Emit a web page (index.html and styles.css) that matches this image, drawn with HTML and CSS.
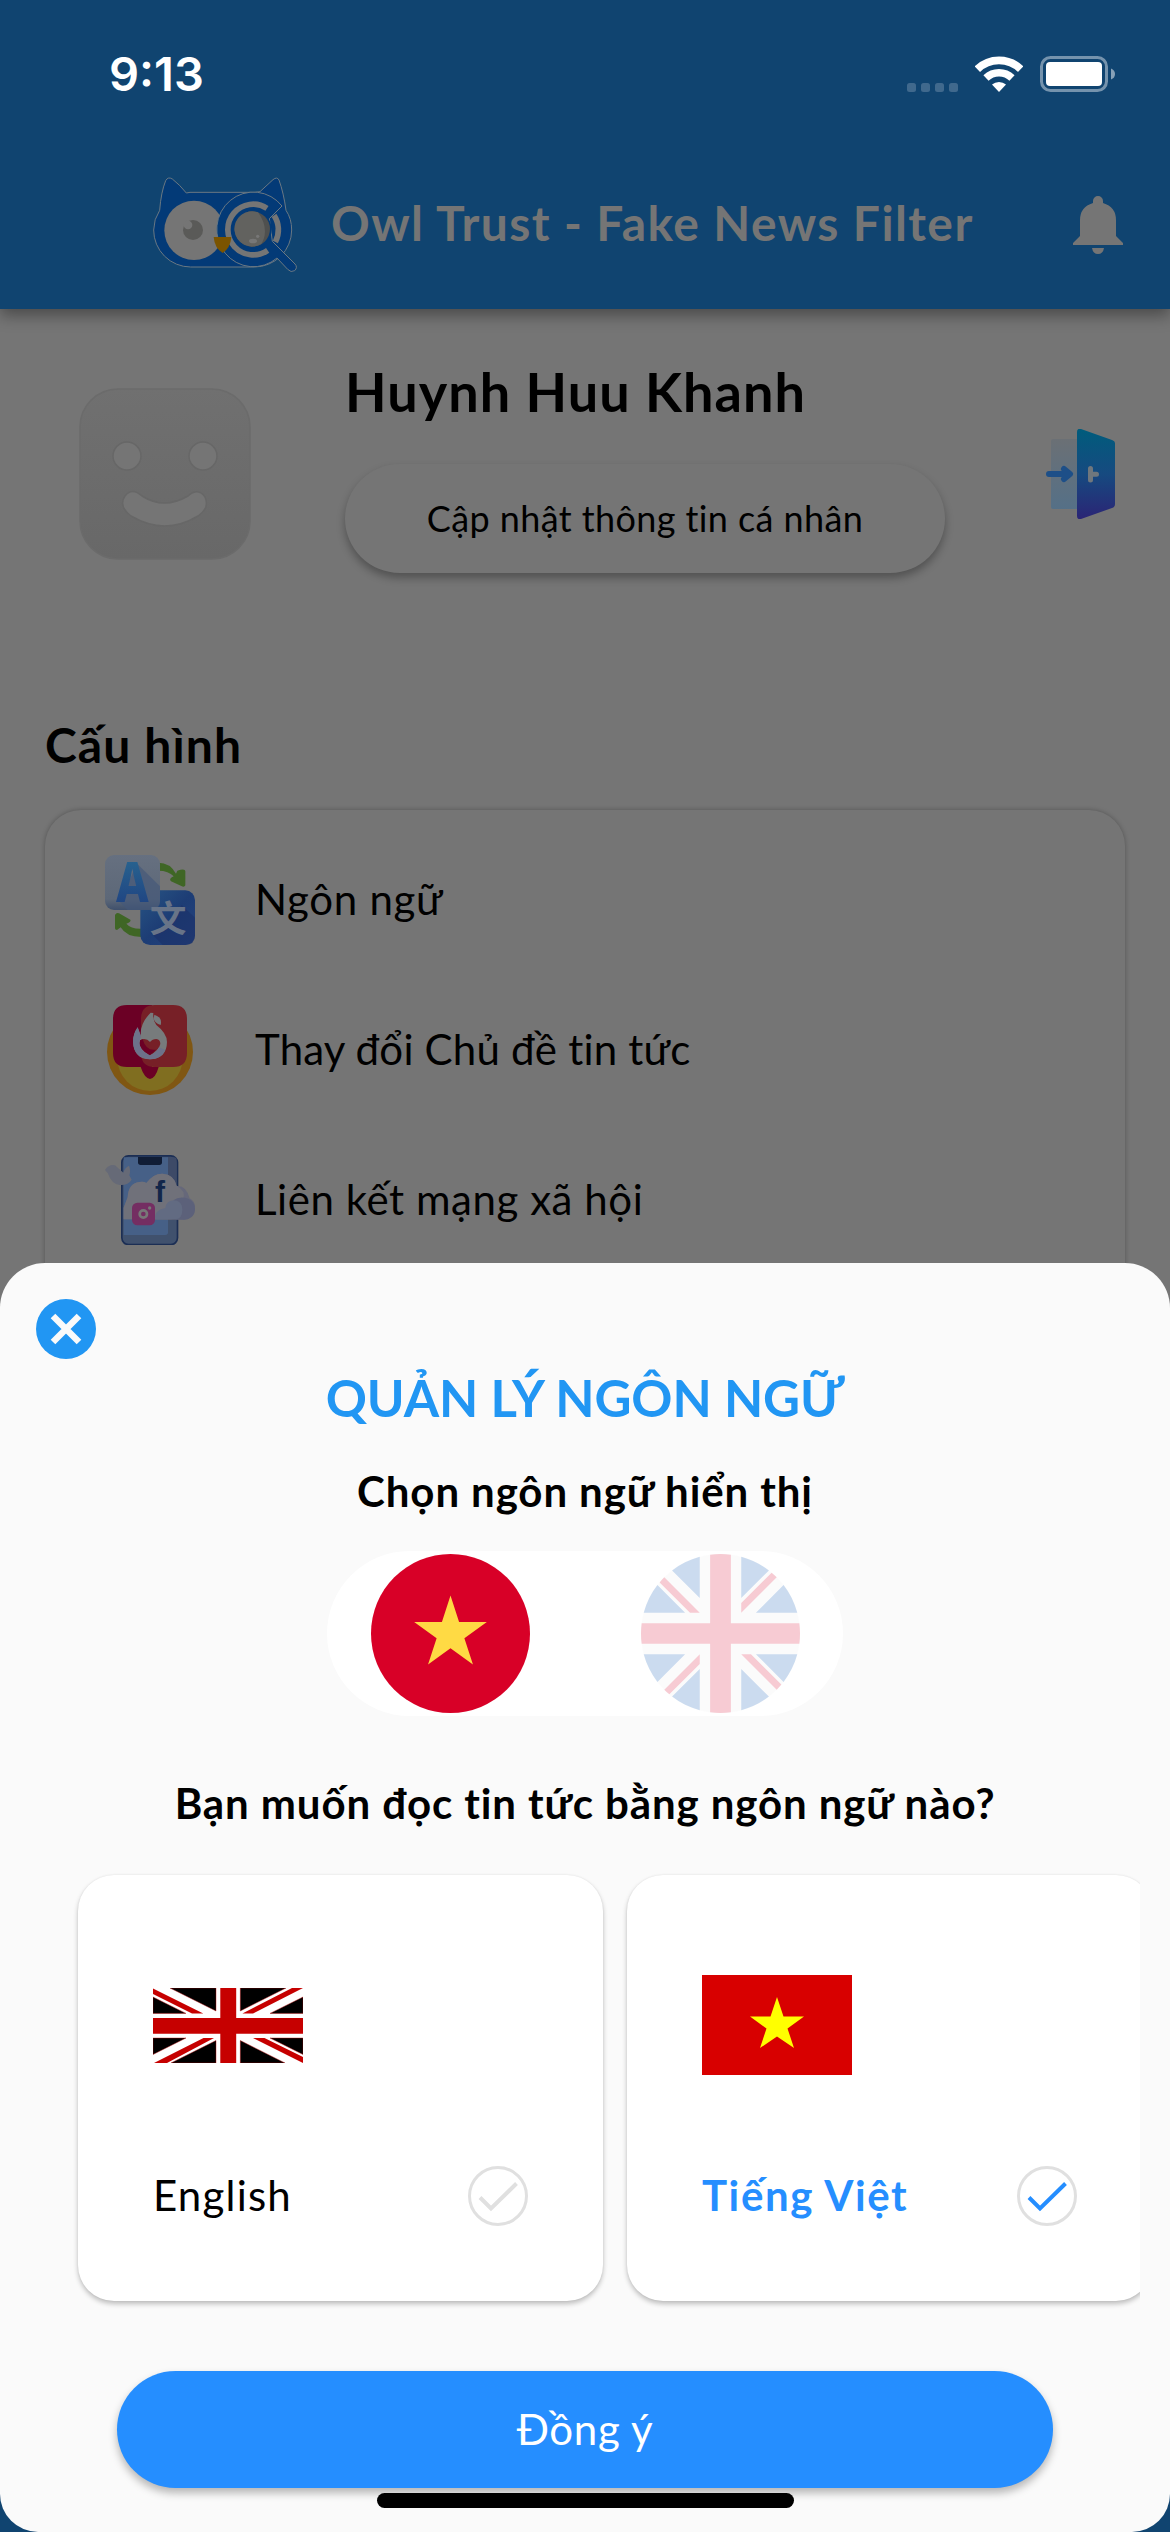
FILE: index.html
```
<!DOCTYPE html>
<html lang="vi">
<head>
<meta charset="utf-8">
<title>Owl Trust - Fake News Filter</title>
<link rel="stylesheet" href="styles.css">
</head>
<body>
<div class="screen">
  <header class="header">
    <div class="status">
      <span class="clock">9:13</span>
      <div class="status-icons">
        <svg class="dots" viewBox="0 0 51 9"><g fill="#40698d"><rect width="9" height="9" rx="2.5"/><rect x="14" width="9" height="9" rx="2.5"/><rect x="28" width="9" height="9" rx="2.5"/><rect x="42" width="9" height="9" rx="2.5"/></g></svg>
        <svg class="wifi" viewBox="0 0 48 36" fill="none" stroke="#fff"><path d="M2.300 13.200a31 31 0 0 1 43.400 0" stroke-width="7.800"/><path d="M11 22a18.600 18.600 0 0 1 26 0" stroke-width="7.400"/><path d="M24 36l-7-7.400a10.400 10.400 0 0 1 14 0z" fill="#fff" stroke="none"/></svg>
        <svg class="battery" viewBox="0 0 75 36"><rect x="1.5" y="1.5" width="65" height="33" rx="9" fill="none" stroke="#7593ad" stroke-width="3"/><rect x="6" y="6" width="56" height="24" rx="4" fill="#fff"/><path d="M71 12.500q4 1.500 4 5.500t-4 5.500z" fill="#87a1b7"/></svg>
      </div>
    </div>
    <div class="titlebar">
      <svg class="owl" viewBox="39 51 432 285">
        <g fill="#033a77" stroke="#6a7883" stroke-width="3" stroke-linejoin="round">
          <path d="M150 97 H345 L360 95 L399 59 Q411 49 417 60 Q431 99 438 151 Q455 176 455 210 A112 111 0 0 1 343 321 H152 A111 111 0 0 1 41 210 Q41 178 59 151 Q63 97 77 62 Q84 49 97 57 Q119 74 139 99z"/>
          <circle cx="162" cy="211" r="89" fill="#757575" stroke="none"/>
          <path d="M426 138 A110 112 0 1 0 411 294 L443 328 Q453 339 464 332 Q474 322 465 312 L397 244 L388 176z"/>
        </g>
        <circle cx="159" cy="210" r="30" fill="#5a5a58"/><circle cx="144" cy="195" r="13" fill="#757575"/>
        <path d="M381 145 A76 76 0 1 0 383 271" fill="none" stroke="#757575" stroke-width="17"/>
        <path d="M402 166 A78 78 0 0 1 406 246" fill="none" stroke="#757575" stroke-width="17"/>
        <circle cx="336" cy="208" r="59" fill="#033a77"/>
        <circle cx="337" cy="207" r="53" fill="#4f504f"/><path d="M354 157A53 53 0 1 0 364 252Q390 207 354 157z" fill="#62625f"/>
        <ellipse cx="339" cy="243" rx="12" ry="7" fill="#777"/><circle cx="353" cy="229" r="5" fill="#777"/>
        <path d="M221 231h53q-3 34-26 48-24-14-27-48z" fill="#7b5400"/>
      </svg>
      <h1 class="app-name">Owl Trust - Fake News Filter</h1>
      <svg class="bell" viewBox="0 0 50 59" fill="#757575"><path d="M20 6a5 5 0 0 1 10 0v2Q43 12 43 25V41l7 7v2H0v-2l7-7V25Q7 12 20 8zM19 53h12q-1 6-6 6t-6-6z"/></svg>
    </div>
  </header>

  <section class="profile">
    <svg class="avatar" viewBox="0 0 172 172">
      <defs><linearGradient id="face" x2="0" y2="1"><stop stop-color="#707070"/><stop offset="1" stop-color="#686868"/></linearGradient></defs>
      <rect x="1" y="1" width="170" height="170" rx="38" fill="url(#face)" stroke="#6b6b6b" stroke-width="1.500"/>
      <g fill="#757575" stroke="#676767" stroke-width="1.500"><circle cx="48" cy="68" r="14"/><circle cx="124" cy="68" r="14"/>
      <path d="M63 108Q85 122 109 108Q119 99 126 109Q131 120 119 128Q86 148 52 128Q39 118 46 108Q53 99 63 108z"/></g>
    </svg>
    <div class="profile-main">
      <h2 class="name">Huynh Huu Khanh</h2>
      <button class="update">Cập nhật thông tin cá nhân</button>
    </div>
    <svg class="door" viewBox="0 0 69 90">
      <defs>
        <linearGradient id="door" x2="0" y2="1"><stop stop-color="#005c7c"/><stop offset=".5" stop-color="#164a80"/><stop offset="1" stop-color="#2b2475"/></linearGradient>
        <linearGradient id="room" x2="0" y2="1"><stop stop-color="#6b7075"/><stop offset="1" stop-color="#557087"/></linearGradient>
      </defs>
      <rect x="5" y="10" width="30" height="70" rx="2" fill="url(#room)"/>
      <path d="M31 3q0-4 4-3l31 11q3 1 3 3v61q0 3-3 4L35 90q-4 1-4-3z" fill="url(#door)"/>
      <path d="M3 45H22M18 40l6 5-6 5" fill="none" stroke="#1d4f88" stroke-width="6" stroke-linecap="round" stroke-linejoin="round"/>
      <path d="M44.500 39.500V51M45 45.200h5.500" fill="none" stroke="#70777d" stroke-width="5" stroke-linecap="round"/>
    </svg>
  </section>

  <h3 class="section-title">Cấu hình</h3>
  <ul class="settings">
    <li class="setting">
      <svg class="setting-icon" viewBox="45 45 270 270">
        <defs>
          <linearGradient id="paper" x2="0" y2="1"><stop stop-color="#667080"/><stop offset=".8" stop-color="#5d6878"/><stop offset="1" stop-color="#3f506c"/></linearGradient>
          <linearGradient id="letter" x2="0" y2="1"><stop stop-color="#2b6e94"/><stop offset="1" stop-color="#1d3b7e"/></linearGradient>
          <linearGradient id="tile" x2="1" y2="1"><stop stop-color="#285584"/><stop offset=".5" stop-color="#1d3d75"/><stop offset="1" stop-color="#25427f"/></linearGradient>
        </defs>
        <path d="M205 68q35 0 53 33l4-9q24-8 24 2v42q-3 7-12 2l-31-14q-8-8 8-15-15-17-46-17zM154 291q-45 0-62-29l-11 8q-6 0-6-5v-40q4-8 12-5l34 19q4 6-12 12 14 16 45 15z" fill="#3f6625"/>
        <rect x="151" y="151" width="164" height="164" rx="29" fill="url(#tile)"/>
        <path d="M275 195L315 233V286Q315 315 286 315H218L183 280L250 240z" fill="#1b3068" opacity=".6"/>
        <rect x="45" y="45" width="165" height="165" rx="27" fill="url(#paper)"/>
        <path d="M140 70L210 139V182Q210 210 183 210H113L91 188z" fill="#44587a" opacity=".65"/>
        <text x="78" y="187" textLength="98" lengthAdjust="spacingAndGlyphs" class="icon-a">A</text>
        <text x="234" y="276" class="icon-cjk">文</text>
      </svg>
      <span class="setting-label tight-a">Ngôn ngữ</span>
    </li>
    <li class="setting">
      <svg class="setting-icon" viewBox="45 495 270 270">
        <circle cx="180" cy="636" r="129" fill="#805713"/><circle cx="180" cy="655" r="98" fill="#806e20"/>
        <path d="M111 495h75v186h20q-9 33-26 36-17-3-28-36h-41q-42 0-42-42v-102q0-42 42-42z" fill="#6b0025"/>
        <path d="M195 495h54q42 0 42 42v102q0 42-42 42h-54q-42 0-42-42v-102q0-42 42-42z" fill="#772027"/>
        <path d="M182 518Q148 552 153 588L143 562Q129 582 129 606Q133 658 180 658Q230 656 231 606Q231 580 199 555Q188 541 190 519zM179 647Q148 628 148 610Q150 597 162 597Q173 597 180 606Q187 597 199 597Q211 599 211 612Q207 631 179 647z" fill="#777b7c" fill-rule="evenodd"/>
        <path d="M143 562L153 590 148 603Q146 629 180 646Q200 636 207 622L226 630Q214 658 180 658Q131 655 129 606Q129 582 143 562z" fill="#6d728a"/>
        <path d="M150 601Q146 629 179 645Q190 638 198 629Q168 634 158 598z" fill="#6b0025"/>
        <path d="M193 524Q218 532 212 555Q194 549 191 536z" fill="#767a7c"/>
      </svg>
      <span class="setting-label tight-b">Thay đổi Chủ đề tin tức</span>
    </li>
    <li class="setting">
      <svg class="setting-icon" viewBox="45 945 270 270">
        <rect x="95.500" y="947.500" width="167" height="266" rx="20" fill="#40516d" stroke="#1b2e54" stroke-width="5"/>
        <path d="M101 952h133v225q0 8-8 8H101z" fill="#466087"/><path d="M234 952h18q8 0 8 8v180h-26z" fill="#3d4a67"/>
        <path d="M144 951h72v16q0 8-8 8h-56q-8 0-8-8z" fill="#111d35"/>
        <path d="M101 1138V1103L113 1072Q115 1030 148 1026Q161 1023 169 1029Q191 1000 218 1001Q252 1003 260 1038Q288 1035 299 1075Q317 1084 315 1108Q312 1137 283 1139z" fill="#66687a"/>
        <path d="M101 1138V1103L113 1072Q115 1030 148 1026Q161 1023 169 1029Q191 1000 218 1001Q252 1003 260 1038Q288 1050 280 1080Q285 1139 240 1138z" fill="#70717a"/>
        <path d="M196 1138q-5-27 30-34 2-22 28-24 37 0 37 30-1 28-27 28z" fill="#626b82"/><path d="M250 1081q27 0 27 29t-24 28l30 1q32-3 32-31 0-23-20-32-27-9-45 5z" fill="#5c617a"/>
        <path d="M45 990q12-18 30-14l25 22q4-15 17-21 6 15 1 29l7 13q-11 18-36 16-24-2-36-36z" fill="#666a77"/>
        <rect x="126" y="1088" width="69" height="68" rx="16" fill="#742e62"/><circle cx="160" cy="1122" r="11" fill="none" stroke="#777" stroke-width="8"/><circle cx="179" cy="1104" r="5" fill="#777"/>
        <text x="210" y="1085" class="icon-f">f</text>
      </svg>
      <span class="setting-label tight-c">Liên kết mạng xã hội</span>
    </li>
  </ul>

  <div class="sheet">
    <button class="close" aria-label="Đóng"><svg viewBox="0 0 60 60"><path d="M17 17L43 43M43 17L17 43" stroke="#fafafa" stroke-width="6.500"/></svg></button>
    <h2 class="sheet-title">QUẢN LÝ NGÔN NGỮ</h2>
    <p class="prompt">Chọn ngôn ngữ hiển thị</p>
    <div class="switch">
      <svg class="round-flag" viewBox="0 0 512 512"><circle cx="256" cy="256" r="256" fill="#d80027"/><path fill="#ffda44" d="M256 133.600l27.600 85h89.400l-72.300 52.500 27.600 85.100L256 303.600l-72.300 52.600 27.600-85.100L139 218.600h89.400z"/></svg>
      <svg class="round-flag faded" viewBox="0 0 512 512"><circle cx="256" cy="256" r="256" fill="#f0f0f0"/>
        <path fill="#0052b4" d="M52.900 100.100c-20.100 26.200-35.300 56.400-44.100 89.100H142zM503.200 189.200c-8.800-32.700-24-62.900-44.100-89l-89.100 89zM8.800 322.800c8.800 32.700 24 62.900 44.100 89l89.100-89zM411.900 52.900c-26.200-20.100-56.400-35.200-89.100-44.100V142zM100.100 459.100c26.200 20.100 56.400 35.300 89.100 44.100V370zM189.200 8.800c-32.700 8.800-62.900 24-89.100 44.100l89.100 89.100zM322.800 503.200c32.700-8.800 62.900-24 89.100-44.100L322.800 370zM370 322.800l89.100 89.100c20.100-26.200 35.300-56.400 44.100-89.100z"/>
        <path fill="#d80027" d="M509.800 222.600H289.400V2.200a257 257 0 0 0-66.800 0v220.400H2.200a257 257 0 0 0 0 66.800h220.400v220.400a257 257 0 0 0 66.800 0V289.400h220.400a257 257 0 0 0 0-66.800zM322.800 322.800L437 437q8-8 15-16.400l-97.800-97.800zM189.200 322.800L75 437q8 8 16.400 15l97.800-97.800zM189.200 189.200L75 75q-8 8-15 16.400l97.800 97.800zM322.800 189.200L437 75q-8-8-16.400-15l-97.800 97.800z"/></svg>
    </div>
    <p class="prompt prompt-news">Bạn muốn đọc tin tức bằng ngôn ngữ nào?</p>
    <div class="cards">
      <div class="card">
        <div class="flag-area"><svg class="flag-uk" viewBox="0 0 150 75"><path fill="#fff" d="M0 0h150v75H0z"/><path stroke="#c60000" stroke-width=".4" d="M17 0h46v23zM0 9l33 16.400H0zM87.300 0H133L87.300 23zM150 9v16.400h-33zM0 50h33L0 66.500zM18 75l45-22.500V75zM117 50h33v16.500zM87.300 52.500L132 75H87.300z"/><path fill="#c60000" d="M67.300 0h15.900v30H150v15.700H83.200V75H67.300V45.700H0V30h67.300zM0 .5l50.300 24.900H39L0 6zM139 0h11l-50 25.400H89.400zM1 75h13l47-25H50.500zM100 50h11.500L150 69v6z"/></svg></div>
        <div class="choice"><span class="lang">English</span><svg class="check" viewBox="0 0 60 60" fill="none"><circle cx="30" cy="30" r="28.500" stroke="#e0e0e0" stroke-width="3"/><path d="M12 31.500L23 42.500L48.500 17.500" stroke="#e0e0e0" stroke-width="4"/></svg></div>
      </div>
      <div class="card">
        <div class="flag-area"><svg class="flag-vn" viewBox="0 0 150 100"><path fill="#d80000" d="M0 0h150v100H0z"/><path fill="#ff0" d="M75 22l6.500 19.500H102L85.500 53.500 92 73 75 61.500 58 73l6.500-19.500L48 41.500h20.500z"/></svg></div>
        <div class="choice"><span class="lang selected">Tiếng Việt</span><svg class="check" viewBox="0 0 60 60" fill="none"><circle cx="30" cy="30" r="28.500" stroke="#e0e0e0" stroke-width="3"/><path d="M12 31.500L23 42.500L48.500 17.500" stroke="#258eff" stroke-width="4"/></svg></div>
      </div>
    </div>
    <button class="confirm">Đồng ý</button>
    <div class="home-bar"></div>
  </div>
</div>
</body>
</html>
```
FILE: styles.css
```
* { box-sizing: border-box; margin: 0; padding: 0; }
body { font-family: Lato, "Noto Sans", sans-serif; color: #000; }
button { border: 0; font: inherit; color: inherit; }
svg { display: block; flex: none; }
h1, h2, h3, p, span { white-space: nowrap; }

.screen {
  position: relative;
  width: 1170px;
  height: 2532px;
  overflow: hidden;
  background: linear-gradient(#757575 2000px, #104470 2000px);
}

.header { position: relative; height: 309px; background: #104470; box-shadow: 0 6px 15px rgba(0, 0, 0, .38); }
.status { height: 148px; display: flex; align-items: center; justify-content: space-between; padding: 0 55px 0 109px; }
.clock { font: 600 47px/60px Inter, sans-serif; color: #fff; }
.status-icons { display: flex; align-items: center; }
.dots { width: 51px; height: 9px; margin: 26px 17px 0 0; }
.wifi { width: 48px; height: 36px; margin-right: 17px; }
.battery { width: 75px; height: 36px; }
.titlebar { height: 153px; display: flex; align-items: center; padding: 0 47px 0 153px; }
.owl { width: 144px; height: 95px; }
.app-name { flex: 1; margin: 0 0 3px 34px; font-size: 48px; line-height: 60px; letter-spacing: 1.4px; color: #757575; }
.bell { width: 50px; height: 59px; }

.profile { height: 336px; display: flex; align-items: flex-start; padding: 57px 55px 0 79px; }
.avatar { width: 172px; height: 172px; margin: 22px 94px 0 0; }
.profile-main { width: 600px; display: flex; flex-direction: column; gap: 46px; }
.name { font-size: 54px; line-height: 52px; letter-spacing: 1.07px; }
.update {
  height: 109px;
  padding-bottom: 1px;
  border-radius: 55px;
  background: #757575;
  box-shadow: 0 5px 8px rgba(0, 0, 0, .3);
  font-size: 36px;
  letter-spacing: .4px;
}
.door { width: 69px; height: 90px; margin: 63px 0 0 auto; }

.section-title { margin: 70px 0 0 45px; font-size: 48px; line-height: 60px; letter-spacing: 1.1px; }
.settings {
  height: 700px;
  margin: 35px 45px 0;
  padding: 15px 60px;
  list-style: none;
  border-radius: 36px;
  background: #757575;
  box-shadow: 0 0 5px rgba(0, 0, 0, .28);
}
.setting { height: 150px; display: flex; align-items: center; gap: 60px; }
.setting-icon { width: 90px; height: 90px; }
.setting-label { padding: 0 0 2px; font-size: 42px; line-height: 60px; }
.tight-a { letter-spacing: .7px; }
.tight-b { letter-spacing: .2px; }
.tight-c { letter-spacing: .55px; }
.icon-a { font: 800 166px "Noto Sans", sans-serif; fill: url(#letter); }
.icon-cjk { font: 700 110px "Noto Sans CJK SC", sans-serif; text-anchor: middle; fill: #687488; }
.icon-f { font: 700 90px "Liberation Sans", sans-serif; text-anchor: middle; fill: #12264a; }

.sheet {
  position: absolute;
  inset: 1263px 0 0;
  display: flex;
  flex-direction: column;
  align-items: center;
  padding-top: 36px;
  border-radius: 45px 45px 38px 38px;
  background: #fafafa;
}
.close { align-self: flex-start; width: 60px; height: 60px; margin-left: 36px; border-radius: 50%; background: #2196f3; }
.sheet-title { margin-top: 8px; font-size: 51px; font-weight: 700; line-height: 62px; letter-spacing: -.1px; color: #2196f3; }
.prompt { margin-top: 32px; font-size: 42px; font-weight: 700; line-height: 60px; letter-spacing: .9px; }
.switch {
  width: 516px;
  height: 165px;
  margin-top: 30px;
  padding: 0 43px 0 44px;
  display: flex;
  align-items: center;
  justify-content: space-between;
  border-radius: 83px;
  background: #fff;
}
.round-flag { width: 159px; height: 159px; }
.faded { opacity: .2; }
.prompt-news { margin-top: 57px; }
.cards {
  align-self: stretch;
  height: 466px;
  margin: 22px 30px 0 58px;
  padding: 20px 0 20px 20px;
  display: flex;
  gap: 24px;
  overflow: hidden;
}
.card {
  flex: none;
  width: 525px;
  height: 426px;
  padding: 75px;
  display: flex;
  flex-direction: column;
  justify-content: space-between;
  border-radius: 36px;
  background: #fff;
  box-shadow: 0 3px 5px rgba(0, 0, 0, .24), 0 0 2px rgba(0, 0, 0, .08);
}
.flag-area { height: 150px; display: flex; align-items: center; }
.flag-uk { width: 150px; height: 75px; }
.flag-vn { width: 150px; height: 100px; }
.choice { display: flex; align-items: center; justify-content: space-between; }
.check { width: 60px; height: 60px; }
.lang { padding-bottom: 2px; font-size: 42px; line-height: 56px; letter-spacing: 1.2px; }
.selected { font-weight: 700; letter-spacing: 1.6px; color: #258eff; }
.confirm {
  width: 936px;
  height: 117px;
  margin-top: 50px;
  padding-bottom: 2px;
  border-radius: 59px;
  background: #258eff;
  box-shadow: 0 5px 8px rgba(0, 0, 0, .28);
  font-size: 42px;
  letter-spacing: .7px;
  color: #fff;
}
.home-bar { width: 417px; height: 15px; margin-top: 5px; border-radius: 8px; background: #000; }
```
